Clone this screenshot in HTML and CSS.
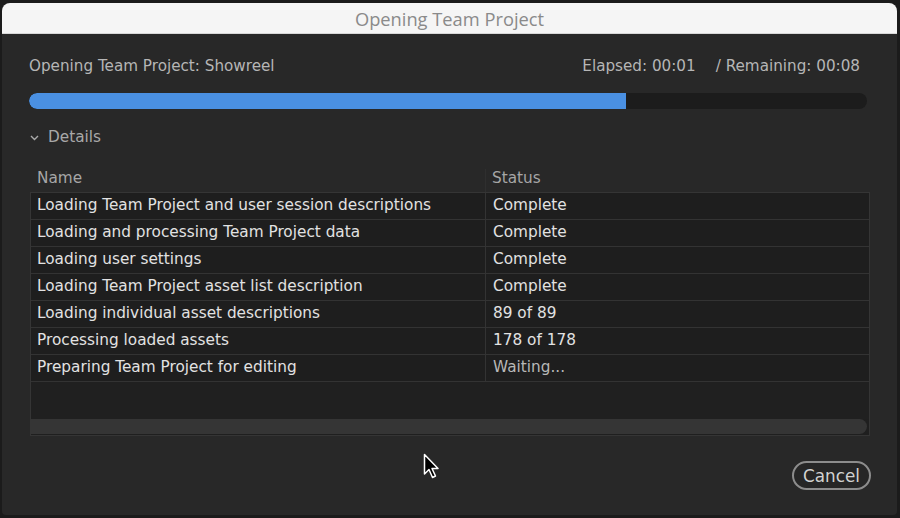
FILE: index.html
```html
<!DOCTYPE html>
<html>
<head>
<meta charset="utf-8">
<link rel="stylesheet" href="styles.css">
</head>
<body>
<div class="window">
  <div class="titlebar">Opening Team Project</div>
  <div class="content">
    <div class="info">
      <span class="proj">Opening Team Project: Showreel</span>
      <span class="times"><span>Elapsed: 00:01</span><span class="rem">/ Remaining: 00:08</span></span>
    </div>
    <div class="progress"><div class="fill" style="width:71.2%"></div></div>
    <div class="details">
      <svg class="chev" width="9" height="6" viewBox="0 0 9 6"><path d="M1 1 L4.5 4.5 L8 1" fill="none" stroke="#aaa" stroke-width="1.4"/></svg>
      <span>Details</span>
    </div>
    <div class="thead">
      <div class="c1">Name</div>
      <div class="c2">Status</div>
    </div>
    <div class="table">
      <div class="row"><div class="c1">Loading Team Project and user session descriptions</div><div class="c2">Complete</div></div>
      <div class="row"><div class="c1">Loading and processing Team Project data</div><div class="c2">Complete</div></div>
      <div class="row"><div class="c1">Loading user settings</div><div class="c2">Complete</div></div>
      <div class="row"><div class="c1">Loading Team Project asset list description</div><div class="c2">Complete</div></div>
      <div class="row"><div class="c1">Loading individual asset descriptions</div><div class="c2">89 of 89</div></div>
      <div class="row"><div class="c1">Processing loaded assets</div><div class="c2">178 of 178</div></div>
      <div class="row"><div class="c1">Preparing Team Project for editing</div><div class="c2 dim">Waiting...</div></div>
      <div class="filler"></div>
      <div class="hscroll"></div>
    </div>
    <div class="footer">
      <button class="cancel">Cancel</button>
    </div>
  </div>
</div>
<svg class="cursor" width="20" height="28" viewBox="0 0 20 28"><path d="M1.5 1.5 L1.5 21 L6 16.5 L9.5 24.5 L12.5 23 L9 15.5 L15 15.5 Z" fill="#000" stroke="#fff" stroke-width="1.5" stroke-linejoin="round"/></svg>
</body>
</html>
```
FILE: styles.css
```css
html, body { margin: 0; padding: 0; }
body {
  width: 900px; height: 518px;
  background: #1b1b1b;
  font-family: "DejaVu Sans", Verdana, sans-serif;
  position: relative;
  overflow: hidden;
}
.window {
  position: absolute;
  left: 2px; top: 3px;
  width: 895px; height: 512px;
  border-radius: 8px 8px 4px 4px;
  overflow: hidden;
  background: #282828;
  display: flex; flex-direction: column;
}
.titlebar {
  height: 31px;
  background: #f5f5f5;
  border-bottom: 1px solid #d8d8d8;
  box-sizing: border-box;
  text-align: center;
  font-family: "Open Sans", "Noto Sans", sans-serif;
  font-size: 18.3px;
  line-height: 31px;
  color: #8a8a8a;
}
.content {
  flex: 1;
  padding: 0 27px 0 27px;
  display: flex; flex-direction: column;
}
.info {
  display: flex; justify-content: space-between;
  margin-top: 23px;
  font-size: 15.2px;
  color: #b6b6b6;
  line-height: 18px;
  padding-right: 10px;
}
.times .rem { margin-left: 20px; }
.progress {
  margin-top: 18px;
  height: 16px;
  background: #1c1c1c;
  border-radius: 8px;
  margin-right: 3px;
  overflow: hidden;
}
.fill { height: 100%; background: #4a90e2; border-radius: 8px 0 0 8px; }
.details {
  margin-top: 19px;
  display: flex; align-items: center;
  font-size: 15.3px; color: #a8a8a8;
  line-height: 18px;
  padding-left: 1px;
}
.chev { margin-right: 9px; margin-top: 1px; }
.thead {
  margin-top: 23px;
  display: flex;
  font-size: 15.3px; color: #a6a6a6;
  line-height: 18px;
  height: 23px;
  margin-left: 1px;
  margin-right: 1px;
}
.thead .c1 { width: 456px; padding-left: 7px; box-sizing: border-box; border-right: 1px solid #2f2f2f; }
.thead .c2 { padding-left: 6px; }
.table {
  margin-left: 1px;
  height: 244px;
  border: 1px solid #353535;
  background: #1f1f1f;
  display: flex; flex-direction: column;
  box-sizing: border-box;
}
.row {
  display: flex;
  height: 27px;
  border-bottom: 1px solid #333;
  box-sizing: border-box;
  font-size: 15.3px;
  line-height: 25px;
  color: #e2e2e2;
  background: #1e1e1e;
}
.row .c1 { width: 455px; padding-left: 6px; box-sizing: border-box; border-right: 1px solid #333; white-space: nowrap; }
.row .c2 { padding-left: 7px; }
.row .dim { color: #b8b8b8; }
.filler { flex: 1; background: #202020; }
.hscroll {
  height: 15px;
  background: #353535;
  border-radius: 0 8px 8px 0;
  margin-right: 2px;
  margin-bottom: 1px;
}
.footer {
  display: flex; justify-content: flex-end;
  margin-top: 25px;
  margin-right: -1px;
}
.cancel {
  width: 79px; height: 29px;
  border: 2px solid #8c8c8c;
  border-radius: 15px;
  background: #262626;
  color: #d2d2d2;
  font-family: "DejaVu Sans", sans-serif;
  font-size: 16.8px;
  padding: 0;
}
.cursor { position: absolute; left: 423px; top: 453px; }
```
